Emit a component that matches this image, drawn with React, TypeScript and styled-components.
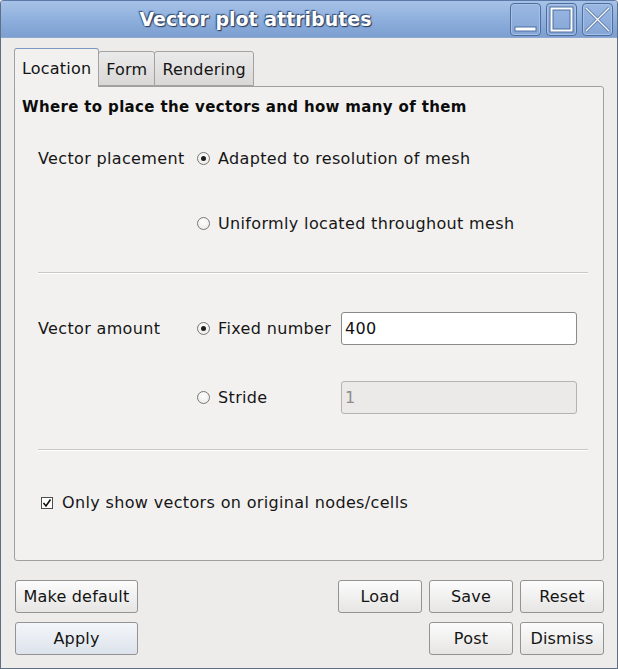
import React from "react";
import styled, { createGlobalStyle } from "styled-components";

const Global = createGlobalStyle`
  html, body { margin: 0; padding: 0; background: #edeceb; }
  * { box-sizing: border-box; }
  body { font-family: "DejaVu Sans", "Noto Sans", sans-serif; }
`;

const Window = styled.div`
  width: 618px;
  height: 669px;
  display: flex;
  flex-direction: column;
  border: 1px solid #5f6f86;
  border-top-color: #5a79a8;
  border-radius: 4px 4px 0 0;
  background: #edeceb;
  overflow: hidden;
  color: #161616;
  font-size: 16px;
  letter-spacing: 0.35px;
`;

const TitleBar = styled.div`
  height: 37px;
  flex: none;
  display: flex;
  align-items: center;
  background: linear-gradient(#a7c2e7, #8fb0dd 50%, #7c9fd1);
  border-bottom: 1px solid #8ea9cf;
  padding: 0 4px 0 0;
`;

const Title = styled.div`
  flex: 1;
  text-align: center;
  padding-left: 0;
  font-size: 19px;
  font-weight: bold;
  color: #ffffff;
  letter-spacing: 0;
  text-shadow: 0 0 2px #2c4064, 1px 1px 1px #27395a, -1px -1px 1px #3a5480;
`;

const WinButtons = styled.div`
  display: flex;
  gap: 5px;
  padding-top: 1px;
`;

const WinButton = styled.div`
  width: 31px;
  height: 33px;
  border: 1px solid #4d6d9e;
  border-radius: 4px;
  box-shadow: inset 0 0 0 1px #a9c1e4;
  background: linear-gradient(#9bb8e2, #84a5d6);
  display: flex;
  align-items: center;
  justify-content: center;
`;

const Content = styled.div`
  flex: 1;
  display: flex;
  flex-direction: column;
  padding: 10px 13px 13px 13px;
`;

const TabBar = styled.div`
  display: flex;
  align-items: flex-end;
  height: 38px;
  position: relative;
  z-index: 1;
`;

const Tab = styled.div<{ $active?: boolean }>`
  height: ${(p) => (p.$active ? "39px" : "35px")};
  margin-bottom: ${(p) => (p.$active ? "-1px" : "0")};
  padding: 0 7px;
  display: flex;
  align-items: center;
  padding-top: ${(p) => (p.$active ? "0" : "1px")};
  border: 1px solid #a2a2a2;
  border-bottom: ${(p) => (p.$active ? "none" : "1px solid #a2a2a2")};
  border-top-color: ${(p) => (p.$active ? "#7b97c4" : "#a2a2a2")};
  border-radius: 3px 3px 0 0;
  margin-left: ${(p) => (p.$active ? "0" : "-1px")};
  background: ${(p) =>
    p.$active ? "#f2f1f0" : "linear-gradient(#ebeaea, #d9d8d7)"};
  color: #141414;
  letter-spacing: 0.2px;
  &:first-child { margin-left: 0; }
`;

const Panel = styled.div`
  flex: 1;
  background: #f2f1f0;
  border: 1px solid #a0a0a0;
  border-radius: 0 3px 3px 3px;
  display: flex;
  flex-direction: column;
`;

const Heading = styled.div`
  margin: 10px 0 0 7px;
  line-height: 20px;
  font-size: 15px;
  font-weight: bold;
  letter-spacing: 0.35px;
  color: #0c0c0c;
`;

const Section = styled.div<{ $top: number }>`
  display: flex;
  margin: ${(p) => p.$top}px 0 0 23px;
`;

const SectionLabel = styled.div`
  width: 159px;
  height: 33px;
  display: flex;
  align-items: center;
`;

const Options = styled.div<{ $gap: number }>`
  display: flex;
  flex-direction: column;
  gap: ${(p) => p.$gap}px;
`;

const OptionRow = styled.div`
  display: flex;
  align-items: center;
  height: 33px;
`;

const RadioOption = styled.label<{ $width?: number }>`
  display: flex;
  align-items: center;
  gap: 8px;
  width: ${(p) => (p.$width ? `${p.$width}px` : "auto")};
`;

const RadioCircle = styled.span<{ $checked?: boolean }>`
  width: 13px;
  height: 13px;
  border-radius: 50%;
  border: 1px solid #787878;
  background: radial-gradient(circle at 50% 35%, #ffffff, #e6e6e6);
  display: flex;
  align-items: center;
  justify-content: center;
  &::after {
    content: "";
    display: ${(p) => (p.$checked ? "block" : "none")};
    width: 5px;
    height: 5px;
    border-radius: 50%;
    background: #1e1e1e;
  }
`;

const TextField = styled.div<{ $disabled?: boolean }>`
  width: 236px;
  height: 33px;
  border: 1px solid ${(p) => (p.$disabled ? "#b4b3b2" : "#8a8a8a")};
  border-radius: 3px;
  background: ${(p) => (p.$disabled ? "#ebeae9" : "#ffffff")};
  color: ${(p) => (p.$disabled ? "#8c8c8c" : "#111111")};
  display: flex;
  align-items: center;
  padding-left: 3px;
`;

const Separator = styled.div<{ $top: number }>`
  margin: ${(p) => p.$top}px 15px 0 23px;
  height: 2px;
  border-top: 1px solid #c9c8c7;
  border-bottom: 1px solid #ffffff;
`;

const CheckRow = styled.label`
  margin: 35px 0 0 26px;
  height: 33px;
  display: flex;
  align-items: center;
  gap: 9px;
`;

const CheckBox = styled.span`
  width: 12px;
  height: 12px;
  border: 1px solid #4e4e4e;
  background: #ffffff;
  display: flex;
  align-items: center;
  justify-content: center;
`;

const ButtonGrid = styled.div`
  margin-top: 19px;
  display: grid;
  grid-template-columns: 123px 1fr 84px 84px 84px;
  grid-template-rows: 33px 33px;
  column-gap: 7px;
  row-gap: 9px;
  padding-left: 1px;
`;

const Button = styled.div<{ $col: number; $row: number; $focus?: boolean }>`
  grid-column: ${(p) => p.$col};
  grid-row: ${(p) => p.$row};
  border: 1px solid #939393;
  border-radius: 3px;
  background: ${(p) =>
    p.$focus
      ? "linear-gradient(#f3f6fa, #dde3ec)"
      : "linear-gradient(#fcfcfc, #e6e5e4)"};
  display: flex;
  align-items: center;
  justify-content: center;
  color: #141414;
  letter-spacing: 0.2px;
`;

export default function App() {
  return (
    <>
      <Global />
      <Window>
        <TitleBar>
          <Title>Vector plot attributes</Title>
          <WinButtons>
            <WinButton>
              <svg width="29" height="31" viewBox="0 0 29 31">
                <rect x="4" y="23" width="21" height="4" fill="#ffffff" stroke="#4f6f9f" strokeWidth="1" />
              </svg>
            </WinButton>
            <WinButton>
              <svg width="29" height="31" viewBox="0 0 29 31">
                <rect x="4.5" y="4.5" width="20" height="22" fill="none" stroke="#4f6f9f" strokeWidth="4" />
                <rect x="4.5" y="4.5" width="20" height="22" fill="none" stroke="#ffffff" strokeWidth="2" />
              </svg>
            </WinButton>
            <WinButton>
              <svg width="29" height="31" viewBox="0 0 29 31">
                <path d="M3 4 L26 27 M26 4 L3 27" stroke="#5676a6" strokeWidth="3" />
                <path d="M3 4 L26 27 M26 4 L3 27" stroke="#ffffff" strokeWidth="1.3" />
              </svg>
            </WinButton>
          </WinButtons>
        </TitleBar>
        <Content>
          <TabBar>
            <Tab $active>Location</Tab>
            <Tab>Form</Tab>
            <Tab>Rendering</Tab>
          </TabBar>
          <Panel>
            <Heading>Where to place the vectors and how many of them</Heading>
            <Section $top={25}>
              <SectionLabel>Vector placement</SectionLabel>
              <Options $gap={32}>
                <OptionRow>
                  <RadioOption>
                    <RadioCircle $checked />
                    Adapted to resolution of mesh
                  </RadioOption>
                </OptionRow>
                <OptionRow>
                  <RadioOption>
                    <RadioCircle />
                    Uniformly located throughout mesh
                  </RadioOption>
                </OptionRow>
              </Options>
            </Section>
            <Separator $top={32} />
            <Section $top={38}>
              <SectionLabel>Vector amount</SectionLabel>
              <Options $gap={36}>
                <OptionRow>
                  <RadioOption $width={144}>
                    <RadioCircle $checked />
                    Fixed number
                  </RadioOption>
                  <TextField>400</TextField>
                </OptionRow>
                <OptionRow>
                  <RadioOption $width={144}>
                    <RadioCircle />
                    Stride
                  </RadioOption>
                  <TextField $disabled>1</TextField>
                </OptionRow>
              </Options>
            </Section>
            <Separator $top={35} />
            <CheckRow>
              <CheckBox>
                <svg width="10" height="10" viewBox="0 0 10 10">
                  <path d="M1.5 5 L4 8 L8.5 1.5" fill="none" stroke="#111" strokeWidth="1.6" />
                </svg>
              </CheckBox>
              Only show vectors on original nodes/cells
            </CheckRow>
          </Panel>
          <ButtonGrid>
            <Button $col={1} $row={1}>Make default</Button>
            <Button $col={1} $row={2} $focus>Apply</Button>
            <Button $col={3} $row={1}>Load</Button>
            <Button $col={4} $row={1}>Save</Button>
            <Button $col={5} $row={1}>Reset</Button>
            <Button $col={4} $row={2}>Post</Button>
            <Button $col={5} $row={2}>Dismiss</Button>
          </ButtonGrid>
        </Content>
      </Window>
    </>
  );
}
